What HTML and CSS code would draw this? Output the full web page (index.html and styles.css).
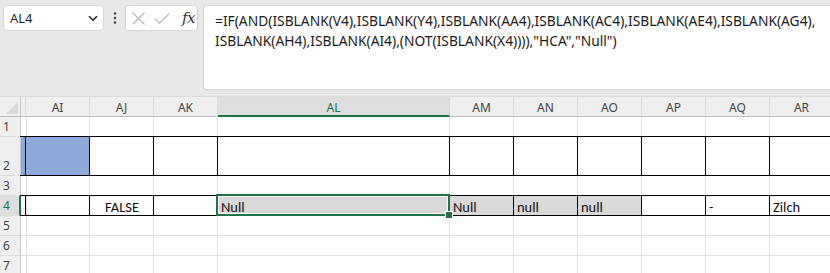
FILE: index.html
```html
<!DOCTYPE html>
<html>
<head>
<meta charset="utf-8">
<link rel="stylesheet" href="styles.css">
</head>
<body>
<div class="toolbar">
  <div class="namebox">
    <span class="nb-text">AL4</span>
    <svg class="chev" width="10" height="7" viewBox="0 0 10 7"><path d="M1 1.2 L5 5.2 L9 1.2" fill="none" stroke="#222" stroke-width="1.6"/></svg>
  </div>
  <div class="dots">
    <svg width="4" height="12" viewBox="0 0 4 12"><circle cx="2" cy="1.5" r="1.3" fill="#444"/><circle cx="2" cy="6" r="1.3" fill="#444"/><circle cx="2" cy="10.5" r="1.3" fill="#444"/></svg>
  </div>
  <div class="fxbox">
    <svg class="ico-x" width="13" height="13" viewBox="0 0 13 13"><path d="M0.5 0.5 L12.5 12.5 M12.5 0.5 L0.5 12.5" stroke="#b4b4b4" stroke-width="1.1" fill="none"/></svg>
    <svg class="ico-ok" width="16" height="11" viewBox="0 0 16 11"><path d="M0.6 5.6 L5.2 10.2 L15.4 0.6" stroke="#b4b4b4" stroke-width="1.1" fill="none"/></svg>
    <span class="fx">fx</span>
  </div>
  <div class="formula">
    <div class="fline">=IF(AND(ISBLANK(V4),ISBLANK(Y4),ISBLANK(AA4),ISBLANK(AC4),ISBLANK(AE4),ISBLANK(AG4),</div>
    <div class="fline">ISBLANK(AH4),ISBLANK(AI4),(NOT(ISBLANK(X4)))),"HCA","Null")</div>
  </div>
</div>
<div class="sheet">
  <!-- header row -->
  <div class="corner"><span class="tri"></span></div>
  <div class="ch"></div>
  <div class="ch">AI</div>
  <div class="ch">AJ</div>
  <div class="ch">AK</div>
  <div class="ch ch-sel">AL</div>
  <div class="ch">AM</div>
  <div class="ch">AN</div>
  <div class="ch">AO</div>
  <div class="ch">AP</div>
  <div class="ch">AQ</div>
  <div class="ch">AR</div>

  <!-- row 1 -->
  <div class="rh">1</div>
  <div class="c"></div><div class="c"></div><div class="c"></div><div class="c"></div><div class="c"></div>
  <div class="c"></div><div class="c"></div><div class="c"></div><div class="c"></div><div class="c"></div><div class="c"></div>

  <!-- row 2 -->
  <div class="rh">2</div>
  <div class="c blue bh"></div>
  <div class="c blue bx"></div>
  <div class="c bx"></div>
  <div class="c bx"></div>
  <div class="c bx"></div>
  <div class="c bx"></div>
  <div class="c bx"></div>
  <div class="c bx"></div>
  <div class="c bx"></div>
  <div class="c bx"></div>
  <div class="c bx"></div>

  <!-- row 3 -->
  <div class="rh">3</div>
  <div class="c"></div><div class="c"></div><div class="c"></div><div class="c"></div><div class="c"></div>
  <div class="c"></div><div class="c"></div><div class="c"></div><div class="c"></div><div class="c"></div><div class="c"></div>

  <!-- row 4 -->
  <div class="rh rh-sel">4</div>
  <div class="c bh"></div>
  <div class="c bx"></div>
  <div class="c bx center">FALSE</div>
  <div class="c bx"></div>
  <div class="c bx gray selected">Null<span class="handle"></span></div>
  <div class="c bx gray">Null</div>
  <div class="c bx gray">null</div>
  <div class="c bx gray">null</div>
  <div class="c bx"></div>
  <div class="c bx">-</div>
  <div class="c bx">Zilch</div>

  <!-- row 5 -->
  <div class="rh">5</div>
  <div class="c"></div><div class="c"></div><div class="c"></div><div class="c"></div><div class="c"></div>
  <div class="c"></div><div class="c"></div><div class="c"></div><div class="c"></div><div class="c"></div><div class="c"></div>

  <!-- row 6 -->
  <div class="rh">6</div>
  <div class="c"></div><div class="c"></div><div class="c"></div><div class="c"></div><div class="c"></div>
  <div class="c"></div><div class="c"></div><div class="c"></div><div class="c"></div><div class="c"></div><div class="c"></div>

  <!-- row 7 -->
  <div class="rh">7</div>
  <div class="c"></div><div class="c"></div><div class="c"></div><div class="c"></div><div class="c"></div>
  <div class="c"></div><div class="c"></div><div class="c"></div><div class="c"></div><div class="c"></div><div class="c"></div>
</div>
</body>
</html>
```

FILE: styles.css
```css
html, body {
  margin: 0;
  padding: 0;
  background: #ffffff;
  overflow: hidden;
}
body {
  width: 830px;
  height: 273px;
  font-family: "Noto Sans", "Open Sans", sans-serif;
}

/* ---------- toolbar / formula bar ---------- */
.toolbar {
  height: 97px;
  box-sizing: border-box;
  background: #e8e8e8;
  display: flex;
  align-items: flex-start;
  padding: 5px 0 0 3px;
  border-bottom: 1px solid #dcdcdc;
}
.namebox {
  width: 101px;
  height: 26px;
  box-sizing: border-box;
  background: #fff;
  border: 1px solid #d6d6d6;
  border-radius: 4px;
  display: flex;
  align-items: center;
  padding: 0 5px 0 6px;
}
.nb-text {
  flex: 1;
  font-size: 13px;
  color: #1f1f1f;
}
.chev { margin-top: 1px; }
.dots {
  width: 21px;
  height: 26px;
  display: flex;
  align-items: center;
  justify-content: center;
}
.fxbox {
  width: 73px;
  height: 26px;
  box-sizing: border-box;
  background: #fff;
  border: 1px solid #d6d6d6;
  border-radius: 4px;
  display: flex;
  align-items: center;
  padding: 0 0 0 6px;
  gap: 9px;
}
.fx {
  font-family: "DejaVu Serif", "Liberation Serif", serif;
  font-style: italic;
  font-size: 15px;
  color: #333;
  margin-left: 3px;
  letter-spacing: -0.5px;
}
.formula {
  flex: 1;
  height: 85px;
  margin-left: 5px;
  box-sizing: border-box;
  background: #fff;
  border: 1px solid #d6d6d6;
  border-right: none;
  border-radius: 4px 0 0 4px;
  padding: 5px 0 0 11px;
  font-size: 13.8px;
  line-height: 20px;
  color: #1a1a1a;
}
.fline { white-space: nowrap; }

/* ---------- sheet grid ---------- */
.sheet {
  display: grid;
  grid-template-columns: 21px 5px 64px 64px 64px 232px 64px 64px 64px 64px 64px 64px;
  grid-template-rows: 20px 20px 39px 20px 20px 20px 20px 20px;
  background: #fff;
}
.corner, .ch, .rh {
  background: #efefef;
  color: #444;
  font-size: 12px;
  box-sizing: border-box;
}
.corner {
  position: relative;
  border-right: 1px solid #c8c8c8;
  border-bottom: 1px solid #bdbdbd;
}
.tri {
  position: absolute;
  right: 2px;
  bottom: 2px;
  width: 0;
  height: 0;
  border-left: 12px solid transparent;
  border-bottom: 12px solid #d9d9d9;
}
.ch {
  display: flex;
  align-items: center;
  justify-content: center;
  border-right: 1px solid #dcdcdc;
  border-bottom: 1px solid #bdbdbd;
  padding-top: 1px;
}
.ch-sel {
  background: #dedede;
  color: #217346;
  border-bottom: 2px solid #217346;
  padding-top: 2px;
}
.rh {
  display: flex;
  align-items: flex-end;
  padding: 0 0 2px 3px;
  line-height: 14px;
  border-right: 1px solid #c8c8c8;
  border-bottom: 1px solid #dcdcdc;
}
.rh-sel {
  background: #dedede;
  color: #217346;
  border-right: 2px solid #217346;
}

.c {
  position: relative;
  box-sizing: border-box;
  border-right: 1px solid #e1e1e1;
  border-bottom: 1px solid #e1e1e1;
  display: flex;
  align-items: flex-end;
  padding: 0 2px 0 3px;
  font-family: "Liberation Sans Narrow", "Carlito", "Liberation Sans", sans-serif;
  font-size: 14.5px;
  line-height: 16px;
  color: #111;
  white-space: nowrap;
}
.center { justify-content: center; }
.blue { background: #8eaadb; }
.gray { background: #d9d9d9; }

/* black cell borders drawn over gridlines */
.bx::after, .bh::after {
  content: "";
  position: absolute;
  top: -1px;
  left: -1px;
  right: -1px;
  bottom: -1px;
  border: 1px solid #000;
  pointer-events: none;
}
.bh::after {
  border-left: none;
  border-right: none;
}

/* active cell */
.selected { z-index: 2; }
.selected::before {
  content: "";
  position: absolute;
  top: -2px;
  left: -2px;
  right: -1px;
  bottom: -1px;
  border: 2px solid #217346;
  box-shadow: inset 0 0 0 1px #fff;
  z-index: 3;
}
.handle {
  position: absolute;
  right: -4px;
  bottom: -4px;
  width: 6px;
  height: 6px;
  background: #217346;
  border: 1px solid #fff;
  z-index: 4;
}
```
